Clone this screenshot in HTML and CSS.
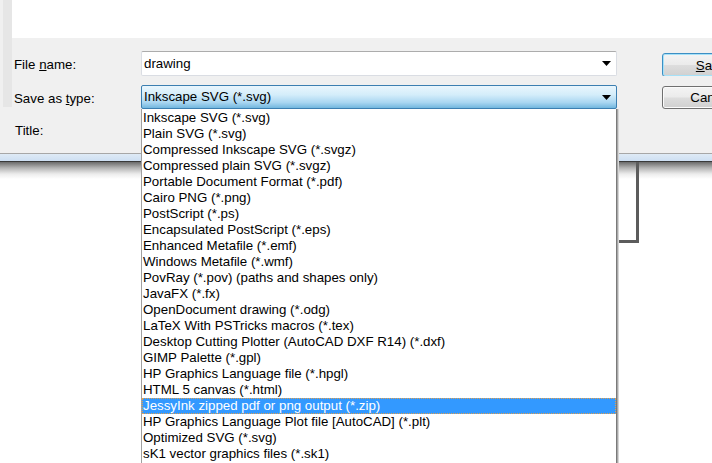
FILE: index.html
```html
<!DOCTYPE html>
<html>
<head>
<meta charset="utf-8">
<title>Save as</title>
<link rel="stylesheet" href="styles.css">
</head>
<body>
<div class="dialog">
  <div class="strip"></div>
  <div class="main">
    <div class="top"></div>
    <div class="form">
      <div class="lbl">File <u>n</u>ame:</div>
      <div class="field"><span>drawing</span><svg class="arrow" width="9" height="5" viewBox="0 0 9 5"><polygon points="0,0 9,0 4.5,5" fill="#000"/></svg></div>
      <div></div>
      <div class="btncell"><div class="btn btn-default btn-save"><u>S</u>ave</div></div>
      <div class="lbl">Save as <u>t</u>ype:</div>
      <div class="combo"><span>Inkscape SVG (*.svg)</span><svg class="arrow" width="9" height="5" viewBox="0 0 9 5"><polygon points="0,0 9,0 4.5,5" fill="#000"/></svg></div>
      <div></div>
      <div class="btncell"><div class="btn btn-cancel">Cancel</div></div>
      <div class="lbl lbl-title">Title:</div>
    </div>
  </div>
</div>
<div class="edge"></div>
<div class="canvas"><div class="page"></div></div>
<ul class="list">
  <li>Inkscape SVG (*.svg)</li>
  <li>Plain SVG (*.svg)</li>
  <li>Compressed Inkscape SVG (*.svgz)</li>
  <li>Compressed plain SVG (*.svgz)</li>
  <li>Portable Document Format (*.pdf)</li>
  <li>Cairo PNG (*.png)</li>
  <li>PostScript (*.ps)</li>
  <li>Encapsulated PostScript (*.eps)</li>
  <li>Enhanced Metafile (*.emf)</li>
  <li>Windows Metafile (*.wmf)</li>
  <li>PovRay (*.pov) (paths and shapes only)</li>
  <li>JavaFX (*.fx)</li>
  <li>OpenDocument drawing (*.odg)</li>
  <li>LaTeX With PSTricks macros (*.tex)</li>
  <li>Desktop Cutting Plotter (AutoCAD DXF R14) (*.dxf)</li>
  <li>GIMP Palette (*.gpl)</li>
  <li>HP Graphics Language file (*.hpgl)</li>
  <li>HTML 5 canvas (*.html)</li>
  <li class="sel">JessyInk zipped pdf or png output (*.zip)</li>
  <li>HP Graphics Language Plot file [AutoCAD] (*.plt)</li>
  <li>Optimized SVG (*.svg)</li>
  <li>sK1 vector graphics files (*.sk1)</li>
</ul>
</body>
</html>
```

FILE: styles.css
```css
html, body {
  margin: 0;
  padding: 0;
}
body {
  width: 712px;
  height: 463px;
  overflow: hidden;
  position: relative;
  background: #fff;
  font-family: "Liberation Sans", Arial, sans-serif;
  font-size: 13.3px;
  color: #000;
}
.dialog {
  display: flex;
  height: 153px;
  background: #f0f0f0;
}
.strip {
  width: 12px;
  height: 107px;
  background: linear-gradient(to right, #f0f0f0 0 3px, #e6e6e6 3px);
  flex: none;
}
.main {
  flex: 1;
  min-width: 0;
  display: flex;
  flex-direction: column;
  overflow: hidden;
}
.top {
  height: 38px;
  background: #fff;
}
.form {
  display: grid;
  grid-template-columns: 127px 476px 45px 50px;
  grid-template-rows: 25px 24px 24px;
  row-gap: 9px;
  padding: 13px 0 0 2px;
}
.lbl {
  align-self: center;
  white-space: nowrap;
  padding-top: 2px;
}
.lbl-title {
  padding-left: 1px;
  padding-top: 1px;
}
.field, .combo {
  box-sizing: border-box;
  display: flex;
  align-items: center;
  justify-content: space-between;
  padding: 0 5px 0 2px;
  border-radius: 2px;
  white-space: nowrap;
}
.field {
  background: #fff;
  border: 1px solid #dadde3;
  border-top-color: #acacac;
}
.combo {
  border: 1px solid #3c7fb1;
  background: linear-gradient(to bottom, #eaf6fd 0%, #d4edfa 40%, #a9d6f1 75%, #72b7de 100%);
}
.field span, .combo span {
  padding-bottom: 1px;
}
.btncell {
  overflow: hidden;
  min-width: 0;
}
.btn {
  box-sizing: border-box;
  width: 98px;
  border-radius: 3px;
  display: flex;
  align-items: center;
  justify-content: center;
  white-space: nowrap;
  background: linear-gradient(to bottom, #f4f4f4 0%, #ebebeb 48%, #dddddd 52%, #d0d0d0 100%);
}
.btn-save {
  margin-top: 2px;
  height: 24px;
  border: 1px solid #3c8fc4;
  box-shadow: inset 0 0 0 1px #a6e1f8;
}
.btn-cancel {
  margin-top: 1px;
  height: 23px;
  border: 1px solid #707070;
  box-shadow: inset 0 0 0 1px #fbfbfb;
}
.edge {
  height: 8px;
  border-top: 1px solid #a7a7a7;
  background: linear-gradient(to bottom, #dfeaf6 0, #cddff2 7px, #3a3a3a 7px);
}
.canvas {
  height: 300px;
  padding-left: 400px;
  background: linear-gradient(to bottom, #6a6a6a 0, #b5b5b5 6px, #ececec 12px, #fff 17px) no-repeat;
}
.page {
  width: 236px;
  height: 78px;
  border-right: 3px solid #5c5c5c;
  border-bottom: 3px solid #5c5c5c;
}
.list {
  position: absolute;
  left: 141px;
  top: 109px;
  width: 474px;
  height: 353px;
  overflow: hidden;
  margin: 0;
  padding: 1px 0 0 0;
  list-style: none;
  background: #fff;
  border-left: 1px solid #a0a0a0;
  border-right: 1px solid #7a7a7a;
  box-shadow: 1px 0 0 #a8a8a8, 2px 0 0 #d6d6d6;
}
.list li {
  height: 16px;
  line-height: 16px;
  padding-left: 1px;
  white-space: nowrap;
}
.list li.sel {
  background: #3399ff;
  color: #fff;
  outline: 1px dotted #e0a050;
  outline-offset: -1px;
}
```
